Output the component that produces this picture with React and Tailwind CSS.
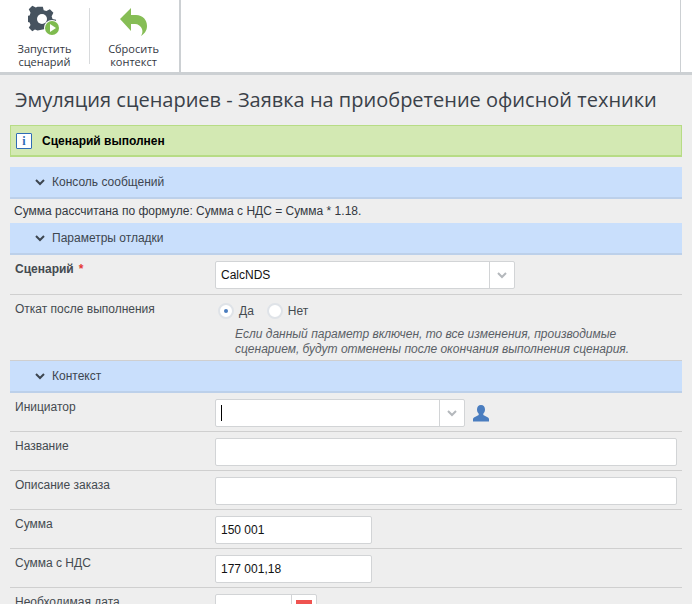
import React from "react";

const Chevron = ({ className = "" }) => (
  <svg width="10" height="7" viewBox="0 0 10 7" className={className} fill="none" stroke="currentColor" strokeWidth="2">
    <path d="M1 1l4 4 4-4" />
  </svg>
);

const ToolButton = ({ icon, children, className = "" }) => (
  <div className={`flex flex-col items-center ${className}`}>
    <div className="h-[32px] flex items-end justify-center">{icon}</div>
    <div className="mt-[5px] text-[11px] leading-[13px] text-[#33383f] text-center font-['Open_Sans',sans-serif]">
      {children}
    </div>
  </div>
);

const Section = ({ title }) => (
  <div className="h-[32px] flex items-center pl-[25px] bg-[#c9dffc] border-b-[2px] border-[#bcd0ea] text-[#3d4650] text-[12px] shrink-0">
    <Chevron className="text-[#3d4650]" />
    <span className="ml-[7px]">{title}</span>
  </div>
);

const Row = ({ label, bold, children, className = "" }) => (
  <div className={`flex border-b border-[#cfcfcf] pl-[5px] ${className}`}>
    <div className={`w-[200px] shrink-0 pt-[7px] text-[12px] leading-[14px] text-[#444a50] ${bold ? "font-bold" : ""}`}>
      {label}
      {bold && <span className="text-[#e53935] ml-[5px]">*</span>}
    </div>
    <div className="pt-[6px]">{children}</div>
  </div>
);

const Field = ({ w, value, caret }) => (
  <div className={`${w} h-[28px] bg-white border border-[#d2d4d6] rounded-[2px] flex items-center pl-[5px] text-[12px] text-[#111]`}>
    {value}
    {caret && <span className="w-px h-[16px] bg-black" />}
  </div>
);

const Combo = ({ w, value, caret }) => (
  <div className={`${w} h-[28px] bg-white border border-[#d2d4d6] rounded-[2px] flex items-center text-[12px] text-[#111]`}>
    <div className="flex-1 pl-[5px] flex items-center">
      {value}
      {caret && <span className="w-px h-[16px] bg-black" />}
    </div>
    <div className="w-[25px] h-full border-l border-[#d2d4d6] flex items-center justify-center">
      <Chevron className="text-[#b4b8bc]" />
    </div>
  </div>
);

const Radio = ({ checked, label }) => (
  <div className="flex items-center">
    <div className="w-[16px] h-[16px] rounded-full bg-white border-[2px] border-[#dfe3e8] flex items-center justify-center">
      {checked && <span className="w-[4px] h-[4px] rounded-full bg-[#4a7dbf]" />}
    </div>
    <span className="ml-[5px] text-[12px] text-[#444a50]">{label}</span>
  </div>
);

export default function App() {
  return (
    <div className="w-[692px] h-[604px] overflow-hidden bg-[#eeeeee] font-['Liberation_Sans',Arial,sans-serif]">
      <div className="h-[75px] bg-white border-b-[3px] border-[#ccd0d3] flex">
        <div className="w-[181px] border-r-[2px] border-[#ccd0d3] flex pt-[5px] shrink-0">
          <ToolButton
            className="w-[89px]"
            icon={
              <svg width="34" height="32" viewBox="0 0 34 32">
                <path
                  fill="#46535f"
                  d="M12 3h6l1 4 3 1 4-2 4 4-2 4 1 3 4 1v5l-4 1-1 3-16 3-3-1-3 2-4-4 2-3-1-3-4-1v-6l4-1 1-3-2-4 4-4 4 2 2-1z"
                  transform="translate(-1 -1) scale(.88)"
                />
                <circle cx="14" cy="14" r="5" fill="#fff" />
                <circle cx="24" cy="23" r="8" fill="#fff" />
                <circle cx="24" cy="23" r="7" fill="#7fbb4f" />
                <path d="M22 19l6 4-6 4z" fill="#fff" />
              </svg>
            }
          >
            Запустить
            <br />
            сценарий
          </ToolButton>
          <div className="w-px h-[56px] mt-[3px] bg-[#d8dadc]" />
          <ToolButton
            className="w-[87px]"
            icon={
              <svg width="30" height="30" viewBox="0 0 30 30">
                <path
                  fill="#86bd55"
                  d="M12 1v7h5c7 0 11 5 11 11 0 5-3 8-6 10 1-2 2-4 1-7-1-3-4-5-7-5h-4v7L1 12z"
                />
              </svg>
            }
          >
            Сбросить
            <br />
            контекст
          </ToolButton>
        </div>
        <div className="w-[500px] border-r border-[#ccd0d3] shrink-0" />
      </div>

      <div className="pl-[10px] pr-[10px]">
        <h1 className="h-[50px] pl-[5px] pt-[10px] text-[20px] leading-[30px] text-[#3a4149] font-['Open_Sans',sans-serif] whitespace-nowrap">
          Эмуляция сценариев - Заявка на приобретение офисной техники
        </h1>
        <div className="h-[32px] flex items-center pl-[5px] bg-[#d3e9b3] border border-b-[2px] border-[#b7dc85] text-[12px] font-bold text-black">
          <div className="w-[16px] h-[16px] bg-white border border-[#2f6db5] rounded-[1px] flex items-center justify-center text-[#2f6db5] text-[12px] font-bold font-['Liberation_Serif',serif]">
            i
          </div>
          <span className="ml-[10px]">Сценарий выполнен</span>
        </div>

        <div className="mt-[10px]">
          <Section title="Консоль сообщений" />
          <div className="h-[24px] flex items-center pl-[4px] text-[12px] text-[#33383f]">
            Сумма рассчитана по формуле: Сумма с НДС = Сумма * 1.18.
          </div>
          <Section title="Параметры отладки" />
          <Row label="Сценарий" bold className="h-[40px]">
            <Combo w="w-[300px]" value="CalcNDS" />
          </Row>
          <Row label="Откат после выполнения" className="h-[66px]">
            <div className="flex gap-[13px] pl-[3px] pt-[1px]">
              <Radio checked label="Да" />
              <Radio label="Нет" />
            </div>
            <div className="mt-[7px] pl-[20px] text-[12px] leading-[15px] italic text-[#5a6066] whitespace-nowrap">
              Если данный параметр включен, то все изменения, производимые
              <br />
              сценарием, будут отменены после окончания выполнения сценария.
            </div>
          </Row>
          <Section title="Контекст" />
          <Row label="Инициатор" className="h-[39px]">
            <div className="flex items-center">
              <Combo w="w-[250px]" caret />
              <svg width="16" height="17" viewBox="0 0 16 17" className="ml-[8px]">
                <path
                  fill="#4a7dbf"
                  d="M8 0c2.6 0 4 2 4 4.5 0 1.800-.7 3.200-1.700 4.200v1.300L15 12.500c.7.400 1 1 1 1.700V16.500H0v-2.300c0-.7.300-1.300 1-1.700L5.700 10V8.700C4.700 7.700 4 6.300 4 4.500 4 2 5.400 0 8 0z"
                />
              </svg>
            </div>
          </Row>
          <Row label="Название" className="h-[39px]">
            <Field w="w-[462px]" />
          </Row>
          <Row label="Описание заказа" className="h-[39px]">
            <Field w="w-[462px]" />
          </Row>
          <Row label="Сумма" className="h-[39px]">
            <Field w="w-[157px]" value="150 001" />
          </Row>
          <Row label="Сумма с НДС" className="h-[39px]">
            <Field w="w-[157px]" value="177 001,18" />
          </Row>
          <Row label="Необходимая дата" className="h-[39px]">
            <div className="w-[102px] h-[28px] bg-white border border-[#d2d4d6] rounded-[2px] flex">
              <div className="flex-1" />
              <div className="w-[25px] border-l border-[#d2d4d6] flex items-center justify-center">
                <svg width="16" height="16" viewBox="0 0 16 16">
                  <rect x="0.500" y="0.500" width="15" height="15" fill="#fff" stroke="#b9bcbf" />
                  <rect width="16" height="4" fill="#ef5350" />
                  <path d="M3 8h10M3 11h10" stroke="#b9bcbf" />
                </svg>
              </div>
            </div>
          </Row>
        </div>
      </div>
    </div>
  );
}
